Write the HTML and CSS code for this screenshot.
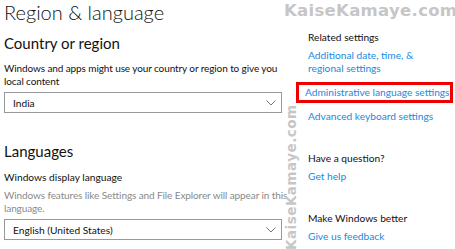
FILE: index.html
```html
<!DOCTYPE html>
<html lang="en">
<head>
  <meta charset="UTF-8">
  <title>Region &amp; language</title>
  <link rel="stylesheet" href="styles.css">
</head>
<body>
  <div class="main">
    <h1>Region &amp; language</h1>
    <h2>Country or region</h2>
    <p class="desc">Windows and apps might use your country or region to give you local content</p>
    <div class="select">
      <span>India</span>
      <svg width="10" height="6" viewBox="0 0 10 6"><path d="M0.5 0.5 L5 5 L9.5 0.5" fill="none" stroke="#777" stroke-width="1"/></svg>
    </div>
    <h2 class="langs">Languages</h2>
    <div class="label">Windows display language</div>
    <p class="desc gray">Windows features like Settings and File Explorer will appear in this language.</p>
    <div class="select">
      <span>English (United States)</span>
      <svg width="10" height="6" viewBox="0 0 10 6"><path d="M0.5 0.5 L5 5 L9.5 0.5" fill="none" stroke="#777" stroke-width="1"/></svg>
    </div>
  </div>
  <div class="side">
    <div class="group">
      <div class="head">Related settings</div>
      <a href="#">Additional date, time, &amp; regional settings</a>
      <a href="#" class="marked">Administrative language settings</a>
      <a href="#">Advanced keyboard settings</a>
    </div>
    <div class="group">
      <div class="head">Have a question?</div>
      <a href="#">Get help</a>
    </div>
    <div class="group">
      <div class="head">Make Windows better</div>
      <a href="#">Give us feedback</a>
    </div>
  </div>
  <div class="mark top">KaiseKamaye.com</div>
  <div class="mark side-mark">KaiseKamaye.com</div>
</body>
</html>
```

FILE: styles.css
```css
body {
  margin: 0;
  background: #fff;
  color: #111;
  font-family: Lato, "Noto Sans", sans-serif;
  display: flex;
  width: 455px;
  height: 249px;
  overflow: hidden;
  position: relative;
}
.main {
  flex: none;
  width: 278px;
  padding-left: 4px;
}
h1 {
  font-weight: 300;
  font-size: 20px;
  margin: 0;
  line-height: 24px;
}
h2 {
  font-weight: 400;
  font-size: 15px;
  margin: 9px 0 0;
  line-height: 20px;
}
h2.langs {
  margin-top: 28px;
}
.desc {
  font-size: 10px;
  letter-spacing: -0.1px;
  line-height: 13px;
  margin: 9px -12px 0 0;
}
.desc.gray {
  color: #8a8a8a;
  margin-top: 5px;
}
.label {
  font-size: 10.2px;
  margin-top: 9px;
  line-height: 14px;
}
.select {
  margin-top: 4px;
  height: 19px;
  border: 1px solid #999;
  display: flex;
  align-items: center;
  justify-content: space-between;
  padding: 0 5px 0 8px;
  font-size: 10.2px;
}
.side {
  flex: 1;
  min-width: 0;
  padding-left: 26px;
  padding-top: 31px;
  font-size: 10.2px;
}
.group {
  display: flex;
  flex-direction: column;
  align-items: flex-start;
  margin-bottom: 29px;
}
.head {
  line-height: 13px;
  margin-bottom: 5px;
}
.side a {
  color: #2189e0;
  text-decoration: none;
  line-height: 13px;
  width: 140px;
}
.side a + a {
  margin-top: 7px;
}
.side a.marked {
  width: auto;
  white-space: nowrap;
  border: 3px solid #e00;
  padding: 1px 0 1px 6px;
  margin-left: -12px;
  margin-top: 7px;
}
.mark {
  position: absolute;
  font-family: "DejaVu Sans", sans-serif;
  font-weight: bold;
  color: #c6c6c6;
  font-size: 16.5px;
  line-height: 20px;
  white-space: nowrap;
  letter-spacing: 0.3px;
}
.mark.top {
  left: 284px;
  top: 1px;
}
.mark.side-mark {
  font-size: 13.5px;
  line-height: normal;
  letter-spacing: 0.5px;
  left: 283px;
  top: 250px;
  transform-origin: 0 0;
  transform: rotate(-90deg);
}
```
